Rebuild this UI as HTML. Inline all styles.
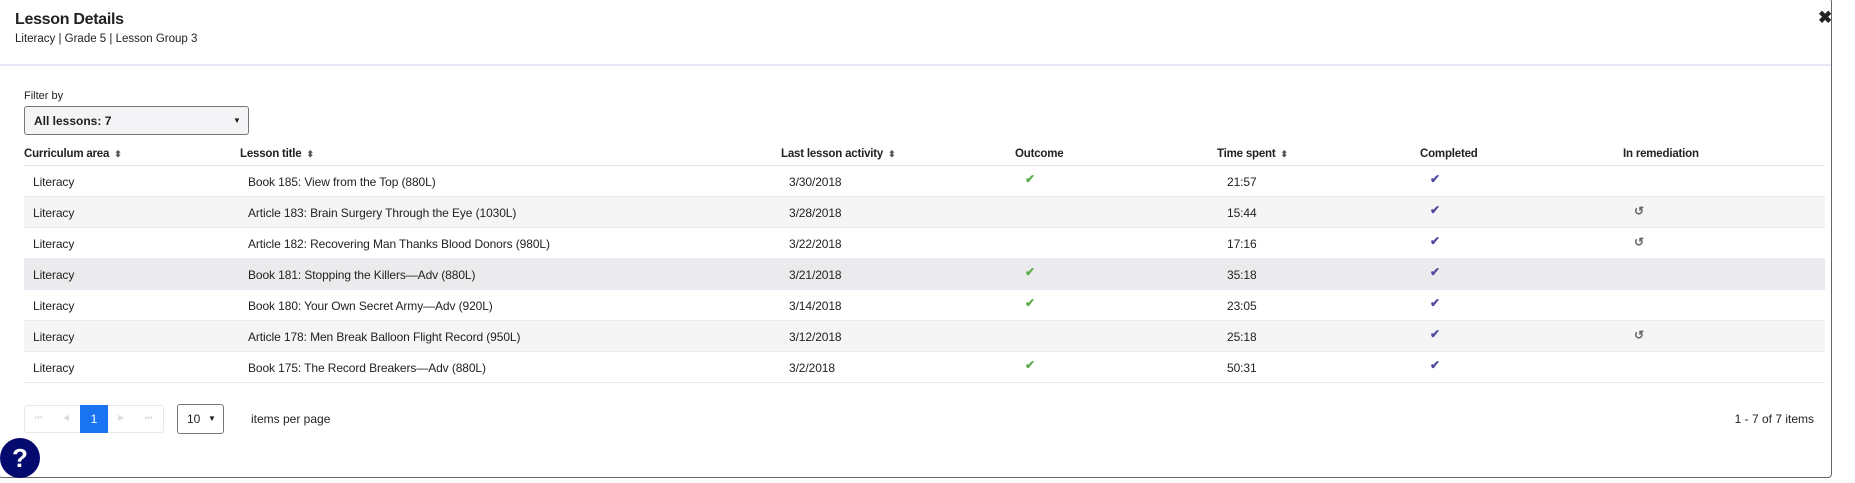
<!DOCTYPE html>
<html><head><style>
*{margin:0;padding:0;box-sizing:border-box}
body{width:1855px;height:483px;background:#fff;font-family:"Liberation Sans",sans-serif;color:#222;position:relative;overflow:hidden;font-size:12px}
.a{position:absolute;white-space:nowrap}
.frame{position:absolute;left:-2px;top:-2px;width:1834px;height:480px;border:1px solid #666;border-radius:4px}
.hdr{position:absolute;left:0;top:64px;width:1831px;height:2px;background:#e4e8f4}
.row{position:absolute;left:24px;width:1801px;height:31px;border-bottom:1px solid #e6ecf6}
.row span{position:absolute;top:9px;letter-spacing:-0.1px}
.hd{font-weight:bold;font-size:11.5px;top:148px;letter-spacing:-0.2px}
.sort{font-size:9px;color:#555;margin-left:5px}
.ck{color:#5cae4b;font-weight:bold}
.cp{color:#4f4a9c;font-weight:bold}
</style></head><body>
<div class="frame"></div>
<div class="a" style="left:15px;top:11px;font-size:16px;font-weight:bold;letter-spacing:-0.3px">Lesson Details</div>
<div class="a" style="left:15px;top:33px;font-size:11.5px">Literacy | Grade 5 | Lesson Group 3</div>
<div class="a" style="left:1818px;top:8px;font-size:17px;font-weight:bold">✖</div>
<div class="hdr"></div>
<div class="a" style="left:24px;top:90px;font-size:11px">Filter by</div>
<div class="a" style="left:24px;top:106px;width:225px;height:29px;border:1px solid #777;border-radius:3px;background:#f4f4f6">
<span class="a" style="left:9px;top:7px;font-weight:bold;font-size:12px">All lessons: 7</span>
<span class="a" style="left:208px;top:9px;font-size:8px">▼</span></div>
<div class="a hd" style="left:24px">Curriculum area<span class="sort">⬍</span></div>
<div class="a hd" style="left:240px">Lesson title<span class="sort">⬍</span></div>
<div class="a hd" style="left:781px">Last lesson activity<span class="sort">⬍</span></div>
<div class="a hd" style="left:1015px">Outcome</div>
<div class="a hd" style="left:1217px">Time spent<span class="sort">⬍</span></div>
<div class="a hd" style="left:1420px">Completed</div>
<div class="a hd" style="left:1623px">In remediation</div>
<div class="a" style="left:24px;top:165px;width:1801px;height:1px;background:#dde2ec"></div>

<div class="row" style="top:166px"><span style="left:9px">Literacy</span><span style="left:224px">Book 185: View from the Top (880L)</span><span style="left:765px">3/30/2018</span><span class="ck" style="left:1001px;top:6px">✔</span><span style="left:1203px">21:57</span><span class="cp" style="left:1406px;top:6px">✔</span></div>
<div class="row" style="top:197px;background:#f5f5f5"><span style="left:9px">Literacy</span><span style="left:224px">Article 183: Brain Surgery Through the Eye (1030L)</span><span style="left:765px">3/28/2018</span><span style="left:1203px">15:44</span><span class="cp" style="left:1406px;top:6px">✔</span><span style="left:1610px;top:7px;color:#666;font-weight:bold">↺</span></div>
<div class="row" style="top:228px"><span style="left:9px">Literacy</span><span style="left:224px">Article 182: Recovering Man Thanks Blood Donors (980L)</span><span style="left:765px">3/22/2018</span><span style="left:1203px">17:16</span><span class="cp" style="left:1406px;top:6px">✔</span><span style="left:1610px;top:7px;color:#666;font-weight:bold">↺</span></div>
<div class="row" style="top:259px;background:#ebebed"><span style="left:9px">Literacy</span><span style="left:224px">Book 181: Stopping the Killers—Adv (880L)</span><span style="left:765px">3/21/2018</span><span class="ck" style="left:1001px;top:6px">✔</span><span style="left:1203px">35:18</span><span class="cp" style="left:1406px;top:6px">✔</span></div>
<div class="row" style="top:290px"><span style="left:9px">Literacy</span><span style="left:224px">Book 180: Your Own Secret Army—Adv (920L)</span><span style="left:765px">3/14/2018</span><span class="ck" style="left:1001px;top:6px">✔</span><span style="left:1203px">23:05</span><span class="cp" style="left:1406px;top:6px">✔</span></div>
<div class="row" style="top:321px;background:#f5f5f5"><span style="left:9px">Literacy</span><span style="left:224px">Article 178: Men Break Balloon Flight Record (950L)</span><span style="left:765px">3/12/2018</span><span style="left:1203px">25:18</span><span class="cp" style="left:1406px;top:6px">✔</span><span style="left:1610px;top:7px;color:#666;font-weight:bold">↺</span></div>
<div class="row" style="top:352px"><span style="left:9px">Literacy</span><span style="left:224px">Book 175: The Record Breakers—Adv (880L)</span><span style="left:765px">3/2/2018</span><span class="ck" style="left:1001px;top:6px">✔</span><span style="left:1203px">50:31</span><span class="cp" style="left:1406px;top:6px">✔</span></div>

<div class="a" style="left:24px;top:405px;width:140px;height:28px;border:1px solid #e8e8e8;border-radius:3px"></div>
<div class="a" style="left:35px;top:413px;font-size:8px;color:#ddd">⏮</div>
<div class="a" style="left:63px;top:413px;font-size:8px;color:#ddd">◀</div>
<div class="a" style="left:80px;top:405px;width:28px;height:28px;background:#1a73f0;color:#fff;text-align:center;line-height:28px">1</div>
<div class="a" style="left:118px;top:413px;font-size:8px;color:#ddd">▶</div>
<div class="a" style="left:145px;top:413px;font-size:8px;color:#ddd">⏭</div>
<div class="a" style="left:177px;top:404px;width:47px;height:30px;border:1px solid #777;border-radius:3px"><span class="a" style="left:9px;top:7px">10</span><span class="a" style="left:30px;top:9px;font-size:8px">▼</span></div>
<div class="a" style="left:251px;top:412px">items per page</div>
<div class="a" style="right:41px;top:412px">1 - 7 of 7 items</div>
<div class="a" style="left:0px;top:438px;width:40px;height:40px;border-radius:50%;background:#050a6e;color:#fff;font-weight:bold;font-size:26px;text-align:center;line-height:40px">?</div>
</body></html>
